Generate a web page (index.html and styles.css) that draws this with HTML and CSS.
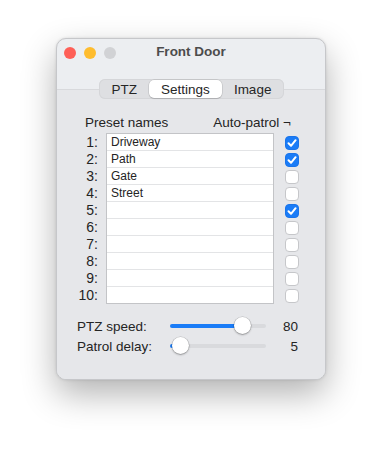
FILE: index.html
```html
<!DOCTYPE html>
<html lang="en">

<head>
    <meta charset="UTF-8">
    <meta name="viewport" content="width=device-width, initial-scale=1.0">
    <link rel="stylesheet" href="styles.css">
</head>

<body>
    <div class="window">
        <div class="titlebar">
            <div class="lights">
                <span class="light red"></span>
                <span class="light yellow"></span>
                <span class="light gray"></span>
            </div>
            <div class="title">Front Door</div>
        </div>

        <div class="tabs">
            <div class="segmented">
                <span class="seg">PTZ</span>
                <span class="seg selected">Settings</span>
                <span class="seg">Image</span>
            </div>
        </div>

        <div class="pane">
            <div class="header">
                <span class="h-names">Preset names</span>
                <span class="h-patrol">Auto-patrol ¬</span>
            </div>

            <div class="presets">
                <div class="numbers">
                    <div class="num">1:</div>
                    <div class="num">2:</div>
                    <div class="num">3:</div>
                    <div class="num">4:</div>
                    <div class="num">5:</div>
                    <div class="num">6:</div>
                    <div class="num">7:</div>
                    <div class="num">8:</div>
                    <div class="num">9:</div>
                    <div class="num">10:</div>
                </div>
                <div class="list">
                    <div class="cell">Driveway</div>
                    <div class="cell">Path</div>
                    <div class="cell">Gate</div>
                    <div class="cell">Street</div>
                    <div class="cell"></div>
                    <div class="cell"></div>
                    <div class="cell"></div>
                    <div class="cell"></div>
                    <div class="cell"></div>
                    <div class="cell"></div>
                </div>
                <div class="checks">
                    <div class="check-row"><span class="check on"><svg viewBox="0 0 14 14"><path d="M3.5 7.3 L6 9.8 L10.6 4.2" /></svg></span></div>
                    <div class="check-row"><span class="check on"><svg viewBox="0 0 14 14"><path d="M3.5 7.3 L6 9.8 L10.6 4.2" /></svg></span></div>
                    <div class="check-row"><span class="check"></span></div>
                    <div class="check-row"><span class="check"></span></div>
                    <div class="check-row"><span class="check on"><svg viewBox="0 0 14 14"><path d="M3.5 7.3 L6 9.8 L10.6 4.2" /></svg></span></div>
                    <div class="check-row"><span class="check"></span></div>
                    <div class="check-row"><span class="check"></span></div>
                    <div class="check-row"><span class="check"></span></div>
                    <div class="check-row"><span class="check"></span></div>
                    <div class="check-row"><span class="check"></span></div>
                </div>
            </div>

            <div class="sliders">
                <div class="slider-row">
                    <span class="s-label">PTZ speed:</span>
                    <div class="track">
                        <div class="fill" style="width: 72px"></div>
                        <div class="thumb" style="left: 64px"></div>
                    </div>
                    <span class="s-value">80</span>
                </div>
                <div class="slider-row">
                    <span class="s-label">Patrol delay:</span>
                    <div class="track">
                        <div class="fill" style="width: 10px"></div>
                        <div class="thumb" style="left: 2px"></div>
                    </div>
                    <span class="s-value">5</span>
                </div>
            </div>
        </div>
    </div>
</body>

</html>
```

FILE: styles.css
```css
html {
    background: #ffffff;
}

body {
    font-family: "Liberation Sans", Arial, sans-serif;
    font-size: 13px;
    color: #242424;
    margin: 0;
    padding: 38px 0 0 56px;
    min-height: 455px;
    box-sizing: border-box;
    background: #ffffff;
}

.window {
    width: 270px;
    height: 342px;
    box-sizing: border-box;
    border-radius: 10px;
    background: #eceef1;
    border: 1px solid #c6c7ca;
    box-shadow: 0 14px 34px rgba(0, 0, 0, 0.3), 0 0 3px rgba(0, 0, 0, 0.12);
    overflow: hidden;
    display: flex;
    flex-direction: column;
}

.titlebar {
    height: 27px;
    display: flex;
    align-items: center;
    padding-left: 7px;
}

.lights {
    display: flex;
    gap: 8px;
    width: 60px;
}

.light {
    width: 12px;
    height: 12px;
    border-radius: 50%;
}

.red {
    background: #fe5f57;
}

.yellow {
    background: #febc2e;
}

.gray {
    background: #d1d2d5;
}

.title {
    flex: 1;
    text-align: center;
    font-weight: bold;
    font-size: 13.5px;
    color: #4c4c4c;
    margin-right: 67px;
    margin-top: -2px;
}

.tabs {
    display: flex;
    justify-content: center;
    margin-top: 13px;
    margin-bottom: -10px;
    position: relative;
    z-index: 1;
    padding-left: 1px;
}

.segmented {
    display: flex;
    height: 20px;
    padding: 0 1px;
    border-radius: 6px;
    background: #dedfe2;
    box-shadow: inset 0 0 0 1px #d5d6d9;
}

.seg {
    display: flex;
    align-items: center;
    padding: 0 12px;
    font-size: 13.5px;
    color: #262626;
}

.seg.selected {
    background: #ffffff;
    border-radius: 5px;
    margin: 1px 0;
    box-shadow: 0 0 0 0.5px rgba(0, 0, 0, 0.15), 0 1px 1px rgba(0, 0, 0, 0.12);
}

.pane {
    flex: 1;
    background: #e6e7ea;
    border-top: 1px solid #d8d9dc;
    padding: 25px 0 0 20px;
}

.header {
    display: flex;
    justify-content: space-between;
    width: 206px;
    padding: 0 8px;
    line-height: 16px;
    font-size: 13.5px;
    margin-bottom: 2px;
}

.presets {
    display: flex;
}

.numbers {
    width: 21px;
    padding-top: 1px;
}

.num {
    height: 17px;
    line-height: 17px;
    text-align: right;
    font-size: 14px;
}

.num:last-child {
    height: 16px;
}

.list {
    width: 168px;
    margin-left: 8px;
    box-sizing: border-box;
    background: #ffffff;
    border: 1px solid #c3c4c7;
}

.cell {
    height: 17px;
    box-sizing: border-box;
    line-height: 16px;
    padding-left: 4px;
    border-bottom: 1px solid #e3e4e6;
    font-size: 12px;
}

.cell:last-child {
    border-bottom: none;
    height: 16px;
}

.checks {
    margin-left: 11px;
    padding-top: 1px;
}

.check-row {
    height: 17px;
    display: flex;
    align-items: center;
}

.check {
    width: 14px;
    height: 14px;
    box-sizing: border-box;
    border-radius: 4px;
    background: #ffffff;
    border: 1px solid #c6c7ca;
    display: flex;
}

.check.on {
    background: #1a7cf7;
    border-color: #1a74ea;
}

.check svg {
    margin: -1px;
    width: 14px;
    height: 14px;
}

.check path {
    fill: none;
    stroke: #ffffff;
    stroke-width: 2;
    stroke-linecap: round;
    stroke-linejoin: round;
}

.sliders {
    margin-top: 12px;
    width: 221px;
}

.slider-row {
    display: flex;
    align-items: center;
    height: 20px;
}

.s-label {
    width: 93px;
    font-size: 13.5px;
}

.track {
    position: relative;
    width: 96px;
    height: 4px;
    border-radius: 2px;
    background: #d9dadd;
}

.fill {
    height: 4px;
    border-radius: 2px;
    background: #1a7cf7;
}

.thumb {
    position: absolute;
    top: -7px;
    width: 17px;
    height: 17px;
    border-radius: 50%;
    background: #ffffff;
    box-shadow: 0 0 0 0.5px rgba(0, 0, 0, 0.2), 0 1px 2px rgba(0, 0, 0, 0.3);
}

.s-value {
    flex: 1;
    text-align: right;
    font-size: 13.5px;
}
```
